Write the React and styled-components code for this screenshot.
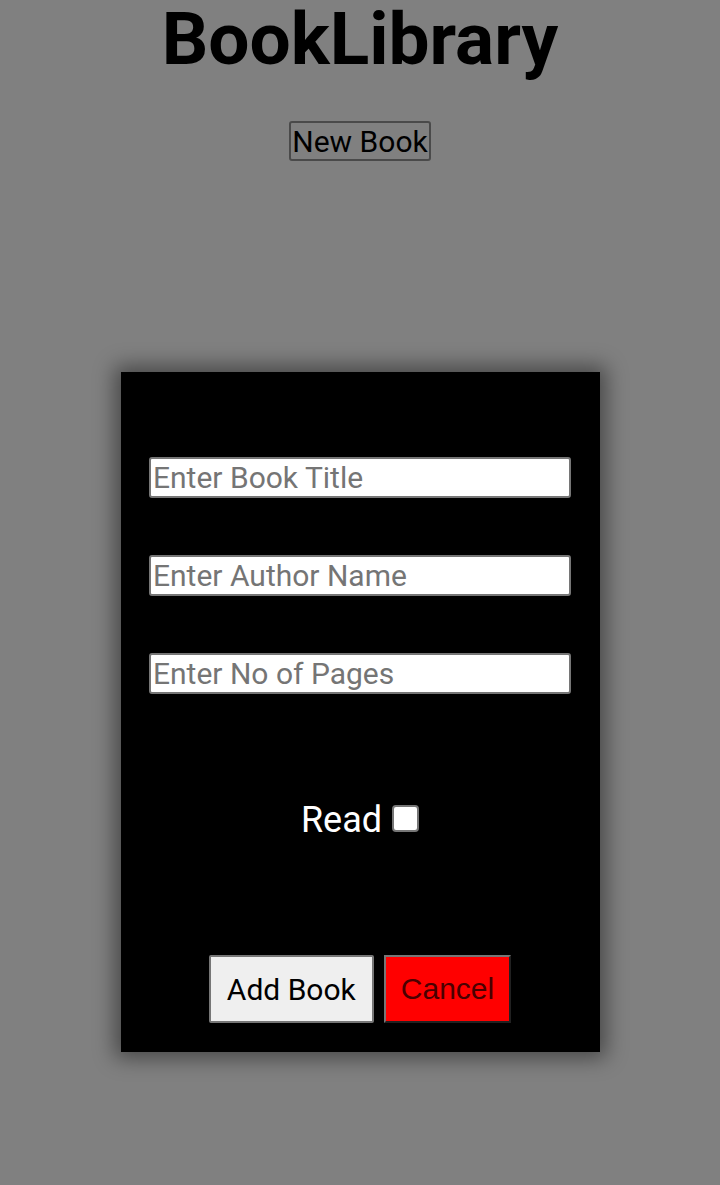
import React, { useState } from 'react'
import styled, { createGlobalStyle } from 'styled-components'

const GlobalStyle = createGlobalStyle`
  body {
    margin: 0;
    background: #808080;
    font-family: Roboto, "Noto Sans", sans-serif;
  }
`

function App() {
  const [read, setRead] = useState(false)

  return (
    <Page>
      <GlobalStyle />
      <Title>BookLibrary</Title>
      <NewButton>New Book</NewButton>
      <Modal>
        <Field type="text" placeholder="Enter Book Title" />
        <Field type="text" placeholder="Enter Author Name" />
        <Field type="number" placeholder="Enter No of Pages" />
        <ReadRow>
          Read
          <Check type="checkbox" checked={read} onChange={() => setRead(!read)} />
        </ReadRow>
        <Actions>
          <ActionButton>Add Book</ActionButton>
          <ActionButton danger>Cancel</ActionButton>
        </Actions>
      </Modal>
    </Page>
  )
}

export default App

const Page = styled.div`
  display: flex;
  flex-direction: column;
  align-items: center;
  min-height: 1185px;
`

const Title = styled.h1`
  margin: 0;
  font-size: 73px;
  line-height: 78px;
  font-weight: 700;
  color: #000;
`

const NewButton = styled.button`
  margin-top: 43px;
  height: 40px;
  width: 142px;
  padding: 0;
  font-family: Roboto, sans-serif;
  font-size: 30px;
  color: #000;
  background: transparent;
  border: 2px solid #4a4a4a;
  border-radius: 3px;
`

const Modal = styled.div`
  margin-top: 211px;
  width: 479px;
  height: 680px;
  box-sizing: border-box;
  padding: 85px 0 0;
  background: #000;
  box-shadow: 0 0 20px 6px rgba(0, 0, 0, 0.45);
  display: flex;
  flex-direction: column;
  align-items: center;
`

const Field = styled.input`
  width: 422px;
  height: 41px;
  box-sizing: border-box;
  margin-bottom: 57px;
  padding: 0 2px;
  font-family: Roboto, sans-serif;
  font-size: 30px;
  background: #fff;
  border: 2px solid #767676;
  border-radius: 3px;
  appearance: textfield;

  &::placeholder {
    color: #757575;
  }

  &::-webkit-inner-spin-button {
    display: none;
  }
`

const ReadRow = styled.label`
  margin-top: 48px;
  display: flex;
  align-items: center;
  gap: 10px;
  color: #fff;
  font-size: 36px;
`

const Check = styled.input`
  width: 27px;
  height: 27px;
  margin: 0;
  appearance: none;
  background: #fff;
  border: 2px solid #767676;
  border-radius: 4px;
  position: relative;
  top: -2px;
`

const Actions = styled.div`
  margin-top: 114px;
  display: flex;
  gap: 10px;
`

const ActionButton = styled.button`
  height: 68px;
  padding: 0 ${p => (p.danger ? '15px' : '16px')};
  font-family: ${p => (p.danger ? '"Liberation Sans", Arial' : 'Roboto')}, sans-serif;
  font-size: 30px;
  color: ${p => (p.danger ? '#4a0000' : '#000')};
  background: ${p => (p.danger ? '#ff0000' : '#efefef')};
  border: 2px ${p => (p.danger ? 'outset #767676' : 'solid #767676')};
  border-radius: ${p => (p.danger ? '0' : '2px')};
`
